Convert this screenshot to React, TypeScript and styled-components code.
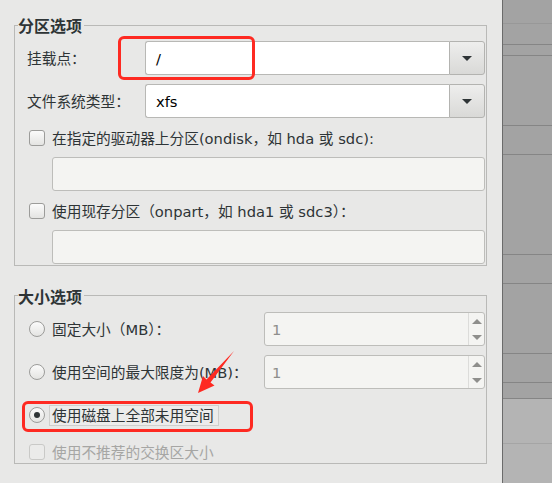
import React from "react";
import styled, { createGlobalStyle } from "styled-components";

const GlobalStyle = createGlobalStyle`
  html, body { margin: 0; padding: 0; background: #e8e8e7; }
  body {
    font-family: "DejaVu Sans", "Noto Sans CJK SC", sans-serif;
    font-size: 14.7px;
    color: #2e3436;
  }
  #root { width: 552px; height: 483px; overflow: hidden; }
  *, *::before, *::after { box-sizing: border-box; }
`;

const Page = styled.div`
  display: flex;
  width: 552px;
  height: 483px;
  background: #e8e8e7;
`;

const Main = styled.div`
  position: relative;
  flex: none;
  width: 502px;
  padding: 15px 0 0 14px;
`;

const Frame = styled.fieldset<{ $mt?: number }>`
  margin: ${(p) => p.$mt ?? 0}px 0 0 0;
  width: 473px;
  min-inline-size: 0;
  padding: 0 1px 1px 3px;
  border: 1px solid #b9b9b7;
`;

const Legend = styled.legend`
  padding: 0 2px 0 0;
  font-family: "Noto Sans CJK SC", "DejaVu Sans", sans-serif;
  font-weight: bold;
  font-size: 16px;
  line-height: 20px;
  color: #2e3436;
`;

const Body = styled.div<{ $pt: number }>`
  display: flex;
  flex-direction: column;
  padding: ${(p) => p.$pt}px 0 0 9px;
`;

const FieldGrid = styled.div`
  display: grid;
  grid-template-columns: 118px 1fr;
  grid-auto-rows: 34px;
  row-gap: 9px;
  align-items: center;
`;

const Label = styled.div`
  line-height: 20px;
  white-space: nowrap;
`;

const Punct = styled.span`
  font-family: "Noto Sans CJK SC", sans-serif;
`;

const Combo = styled.div`
  display: flex;
  height: 34px;
`;

const ComboText = styled.div`
  flex: 1;
  display: flex;
  align-items: center;
  padding: 0 10px;
  background: #ffffff;
  border: 1px solid #b8b8b5;
  border-right: none;
  border-radius: 3px 0 0 3px;
  color: #000;
`;

const ComboButton = styled.div`
  width: 36px;
  display: flex;
  align-items: center;
  justify-content: center;
  border: 1px solid #b3b3b0;
  border-radius: 0 3px 3px 0;
  background: linear-gradient(#eeeeed, #d9d9d7);
`;

const OptionRow = styled.div<{ $mt: number; $h: number }>`
  display: flex;
  align-items: center;
  height: ${(p) => p.$h}px;
  margin-top: ${(p) => p.$mt}px;
  padding-left: 2px;
  white-space: nowrap;
`;

const CheckBox = styled.span<{ $disabled?: boolean }>`
  flex: none;
  width: 16px;
  height: 16px;
  margin-right: 4px;
  border-radius: 3px;
  border: 1px solid ${(p) => (p.$disabled ? "#c9c9c7" : "#9c9c9a")};
  background: ${(p) =>
    p.$disabled ? "#ebebea" : "linear-gradient(#fbfbfb, #e4e4e2)"};
`;

const Radio = styled.span<{ $checked?: boolean }>`
  flex: none;
  width: 16px;
  height: 16px;
  margin-right: 4px;
  border-radius: 50%;
  border: 1px solid #9c9c9a;
  background: linear-gradient(#fbfbfb, #e4e4e2);
  display: flex;
  align-items: center;
  justify-content: center;
  &::after {
    content: "";
    display: ${(p) => (p.$checked ? "block" : "none")};
    width: 6px;
    height: 6px;
    border-radius: 50%;
    background: #2e3436;
  }
`;

const OptionText = styled.span<{ $focused?: boolean; $disabled?: boolean }>`
  line-height: 19px;
  padding: 0 4px 0 2px;
  border: 1px solid ${(p) => (p.$focused ? "#cfcfcd" : "transparent")};
  background: ${(p) => (p.$focused ? "#ececeb" : "transparent")};
  color: ${(p) => (p.$disabled ? "#a6a6a4" : "#2e3436")};
`;

const Entry = styled.div<{ $mt: number }>`
  height: 34px;
  margin: ${(p) => p.$mt}px 0 0 25px;
  background: #f4f4f2;
  border: 1px solid #bdbdba;
  border-radius: 3px;
`;

const SpinRow = styled.div<{ $mt: number }>`
  display: grid;
  grid-template-columns: 237px 1fr;
  align-items: center;
  height: 34px;
  margin-top: ${(p) => p.$mt}px;
`;

const RadioCell = styled.div`
  display: flex;
  align-items: center;
  padding-left: 2px;
  white-space: nowrap;
`;

const Spin = styled.div`
  display: flex;
  height: 34px;
  background: #f4f4f2;
  border: 1px solid #bdbdba;
  border-radius: 3px;
`;

const SpinValue = styled.div`
  flex: 1;
  display: flex;
  align-items: center;
  padding-left: 7px;
  color: #8e8e8c;
`;

const SpinButtons = styled.div`
  width: 16px;
  display: flex;
  flex-direction: column;
  border-left: 1px solid #dcdcda;
`;

const SpinHalf = styled.div`
  flex: 1;
  display: flex;
  align-items: center;
  justify-content: center;
`;

const Side = styled.div`
  flex: 1;
  display: flex;
  flex-direction: column;
  border-left: 1px solid #6b6b6b;
`;

const SideRow = styled.div<{ $h?: number; $line?: string; $light?: boolean }>`
  flex: ${(p) => (p.$h ? "none" : "1")};
  height: ${(p) => (p.$h ? `${p.$h}px` : "auto")};
  background: ${(p) => (p.$light ? "#b4b4b4" : "#a3a3a3")};
  border-bottom: ${(p) => (p.$line ? `1px solid ${p.$line}` : "none")};
`;

const Marker = styled.div<{ $x: number; $y: number; $w: number; $h: number }>`
  position: absolute;
  left: ${(p) => p.$x}px;
  top: ${(p) => p.$y}px;
  width: ${(p) => p.$w}px;
  height: ${(p) => p.$h}px;
  border: 3px solid #fe2a22;
  border-radius: 6px;
  pointer-events: none;
`;

const ArrowLayer = styled.svg`
  position: absolute;
  left: 0;
  top: 0;
  pointer-events: none;
`;

const DownTriangle = ({ color }: { color: string }) => (
  <svg width="10" height="5" viewBox="0 0 10 5">
    <polygon points="0,0 10,0 5,5" fill={color} />
  </svg>
);

const UpTriangle = ({ color }: { color: string }) => (
  <svg width="10" height="5" viewBox="0 0 10 5">
    <polygon points="0,5 10,5 5,0" fill={color} />
  </svg>
);

const ComboField = ({ value }: { value: string }) => (
  <Combo>
    <ComboText>{value}</ComboText>
    <ComboButton>
      <DownTriangle color="#2e3436" />
    </ComboButton>
  </Combo>
);

const SpinField = ({ value }: { value: string }) => (
  <Spin>
    <SpinValue>{value}</SpinValue>
    <SpinButtons>
      <SpinHalf>
        <UpTriangle color="#8e8e8c" />
      </SpinHalf>
      <SpinHalf>
        <DownTriangle color="#8e8e8c" />
      </SpinHalf>
    </SpinButtons>
  </Spin>
);

const sideRows: { h: number; line: string; light?: boolean }[] = [
  { h: 24, line: "#989898" },
  { h: 21, line: "#858585" },
  { h: 11, line: "#858585" },
  { h: 70, line: "#858585" },
  { h: 29, line: "#858585" },
  { h: 100, line: "#858585" },
  { h: 29, line: "#858585" },
  { h: 70, line: "#858585" },
  { h: 29, line: "#858585" },
  { h: 16, line: "#858585" },
  { h: 45, line: "#a5a5a5", light: true },
];

export default function App() {
  return (
    <>
      <GlobalStyle />
      <Page>
        <Main>
          <Frame>
            <Legend>分区选项</Legend>
            <Body $pt={6}>
              <FieldGrid>
                <Label>
                  挂载点<Punct>：</Punct>
                </Label>
                <ComboField value="/" />
                <Label>
                  文件系统类型<Punct>：</Punct>
                </Label>
                <ComboField value="xfs" />
              </FieldGrid>
              <OptionRow $mt={10} $h={20}>
                <CheckBox />
                <OptionText>
                  在指定的驱动器上分区(ondisk<Punct>，</Punct>如 hda 或 sdc):
                </OptionText>
              </OptionRow>
              <Entry $mt={9} />
              <OptionRow $mt={10} $h={20}>
                <CheckBox />
                <OptionText>
                  使用现存分区<Punct>（</Punct>onpart<Punct>，</Punct>如 hda1 或 sdc3
                  <Punct>）：</Punct>
                </OptionText>
              </OptionRow>
              <Entry $mt={9} />
            </Body>
          </Frame>

          <Frame $mt={19.5}>
            <Legend>大小选项</Legend>
            <Body $pt={6.5}>
              <SpinRow $mt={0}>
                <RadioCell>
                  <Radio />
                  <OptionText>
                    固定大小<Punct>（</Punct>MB<Punct>）：</Punct>
                  </OptionText>
                </RadioCell>
                <SpinField value="1" />
              </SpinRow>
              <SpinRow $mt={9}>
                <RadioCell>
                  <Radio />
                  <OptionText>
                    使用空间的最大限度为(MB)<Punct>：</Punct>
                  </OptionText>
                </RadioCell>
                <SpinField value="1" />
              </SpinRow>
              <OptionRow $mt={9} $h={34}>
                <Radio $checked />
                <OptionText $focused>使用磁盘上全部未用空间</OptionText>
              </OptionRow>
              <OptionRow $mt={10} $h={20}>
                <CheckBox $disabled />
                <OptionText $disabled>使用不推荐的交换区大小</OptionText>
              </OptionRow>
            </Body>
          </Frame>

          <Marker $x={118} $y={36} $w={137} $h={44} />
          <Marker $x={22} $y={401} $w={231} $h={31} />
          <ArrowLayer width="502" height="483" viewBox="0 0 502 483">
            <polygon
              points="234,351 210.5,382.5 214.5,385.5 198,393 203,376 206.5,379.5"
              fill="#fe2a22"
            />
          </ArrowLayer>
        </Main>
        <Side>
          {sideRows.map((r, i) => (
            <SideRow key={i} $h={r.h} $line={r.line} $light={r.light} />
          ))}
          <SideRow $light />
        </Side>
      </Page>
    </>
  );
}
